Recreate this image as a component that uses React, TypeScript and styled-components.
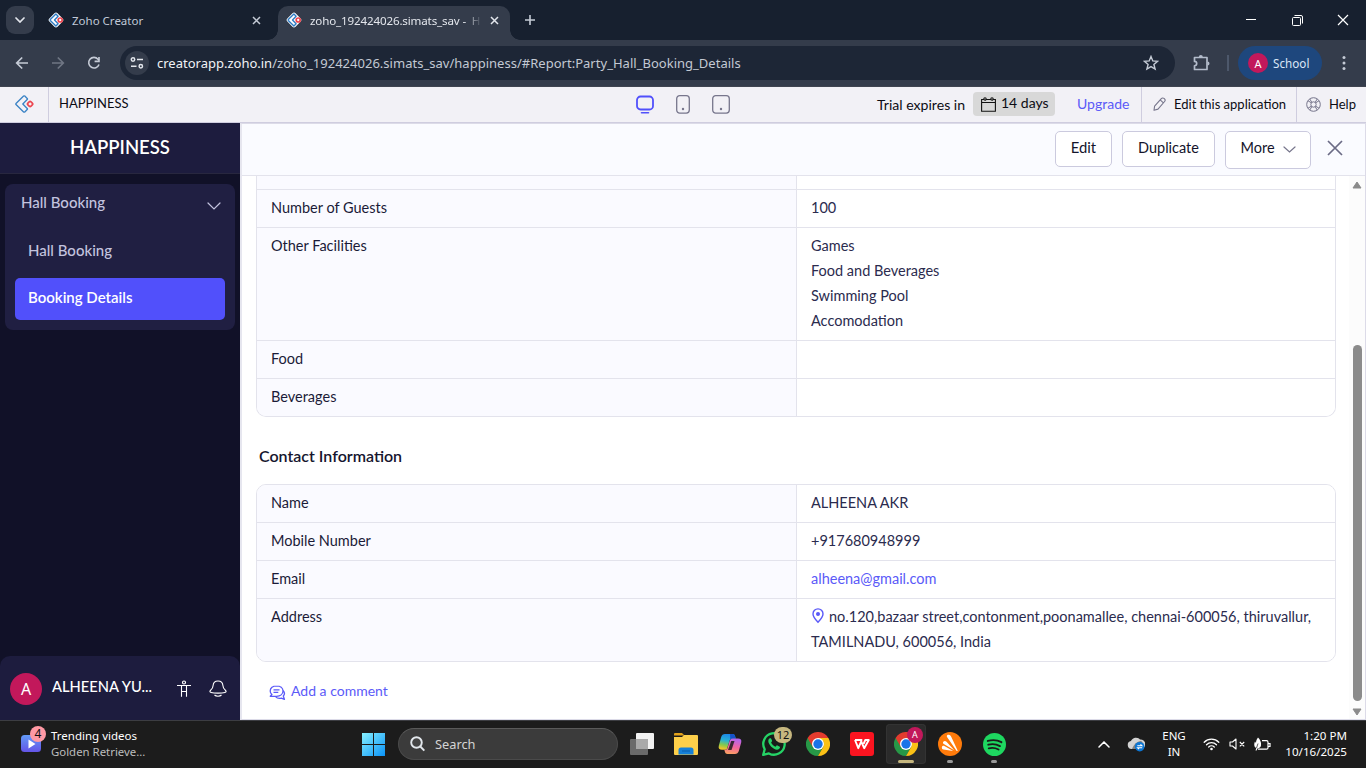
import React from "react";
import styled, { createGlobalStyle } from "styled-components";

const GlobalStyle = createGlobalStyle`
  *, *::before, *::after { box-sizing: border-box; }
  html, body { margin: 0; padding: 0; }
  body { width: 1366px; height: 768px; overflow: hidden; background: #fff; }
  svg { display: block; flex: none; }
`;

const ui = `"Noto Sans", "Open Sans", sans-serif`;
const lato = `Lato, "Open Sans", sans-serif`;

const Screen = styled.div`
  width: 1366px;
  height: 768px;
  display: flex;
  flex-direction: column;
  overflow: hidden;
  font-family: ${lato};
`;

/* Text run with fine control of tracking and vertical nudge */
const Label = styled.span<{ $size?: number; $track?: number; $weight?: number; $color?: string; $lift?: number; $ui?: boolean }>`
  font-family: ${(p) => (p.$ui ? ui : lato)};
  font-size: ${(p) => p.$size ?? 15}px;
  letter-spacing: ${(p) => (p.$track ? p.$track + "px" : "normal")};
  font-weight: ${(p) => p.$weight ?? 400};
  color: ${(p) => p.$color ?? "inherit"};
  padding-bottom: ${(p) => p.$lift ?? 0}px;
  white-space: nowrap;
`;

/* ---------- browser chrome ---------- */
const TabStrip = styled.div`
  height: 40px;
  flex: none;
  background: #17202f;
  display: flex;
  align-items: flex-end;
`;
const TabSearch = styled.div`
  width: 28px;
  height: 28px;
  margin: 0 8px 6px 6px;
  border-radius: 9px;
  background: #343c4b;
  display: grid;
  place-items: center;
`;
const Tab = styled.div<{ $active?: boolean }>`
  height: 34px;
  width: ${(p) => (p.$active ? 232 : 236)}px;
  padding: 0 ${(p) => (p.$active ? 8 : 14)}px 6px ${(p) => (p.$active ? 8 : 6)}px;
  border-radius: 10px 10px 0 0;
  background: ${(p) => (p.$active ? "#343c4b" : "transparent")};
  color: ${(p) => (p.$active ? "#e3e6ec" : "#c0c9d8")};
  display: flex;
  align-items: center;
  position: relative;
  ${(p) => p.$active && `
    &::before, &::after {
      content: "";
      position: absolute;
      bottom: 0;
      width: 10px;
      height: 10px;
    }
    &::before { left: -10px; background: radial-gradient(circle at 0 0, transparent 9.5px, #343c4b 10px); }
    &::after { right: -10px; background: radial-gradient(circle at 100% 0, transparent 9.5px, #343c4b 10px); }
  `}
`;
const TabTitle = styled.div<{ $fade?: boolean }>`
  flex: 1;
  margin-left: 8px;
  white-space: nowrap;
  display: flex;
  align-items: center;
  ${(p) => p.$fade && "mask-image: linear-gradient(90deg, #000 155px, transparent 172px);"}
`;
const TabClose = styled.div`
  width: 16px;
  display: grid;
  place-items: center;
`;
const NewTab = styled.div`
  width: 20px;
  height: 28px;
  margin: 0 0 6px 10px;
  display: grid;
  place-items: center;
`;
const WindowButtons = styled.div`
  margin-left: auto;
  height: 40px;
  display: flex;
`;
const WindowButton = styled.div`
  width: 46px;
  display: grid;
  place-items: center;
`;
const Toolbar = styled.div`
  height: 47px;
  flex: none;
  background: #343c4b;
  border-bottom: 1px solid #3f4450;
  display: flex;
  align-items: center;
  padding-left: 4px;
`;
const ToolButton = styled.div<{ $w?: number }>`
  width: ${(p) => p.$w ?? 36}px;
  flex: none;
  display: grid;
  place-items: center;
`;
const Omnibox = styled.div`
  width: 1055px;
  height: 34px;
  margin-left: 8px;
  border-radius: 17px;
  background: #1d2636;
  display: flex;
  align-items: center;
  padding: 0 16px 0 5px;
`;
const SiteInfo = styled.div`
  width: 24px;
  height: 24px;
  border-radius: 12px;
  background: #343c4b;
  display: grid;
  place-items: center;
  margin-right: 8px;
`;
const Url = styled.div`
  flex: 1;
  color: #c3c9d3;
  white-space: nowrap;
  display: flex;
`;
const ToolDivider = styled.div`
  width: 2px;
  height: 16px;
  background: #4d586b;
  margin: 0 9px 0 0;
`;
const Profile = styled.div`
  width: 84px;
  height: 34px;
  border-radius: 17px;
  background: #1e477d;
  display: flex;
  align-items: center;
  gap: 5px;
  padding-left: 10px;
`;
const Avatar = styled.div<{ $size: number; $font: number }>`
  width: ${(p) => p.$size}px;
  height: ${(p) => p.$size}px;
  flex: none;
  border-radius: 50%;
  background: #c2185b;
  color: #fff;
  font-family: ${ui};
  font-size: ${(p) => p.$font}px;
  line-height: 1;
  display: grid;
  place-items: center;
`;

/* ---------- application bar ---------- */
const AppBar = styled.div`
  height: 36px;
  flex: none;
  background: #f2f1f6;
  border-bottom: 1px solid #cfcddf;
  display: flex;
  color: #0c0c14;
`;
const BarCell = styled.div<{ $w: number; $pad?: number; $line?: "left" | "right"; $gap?: number }>`
  width: ${(p) => p.$w}px;
  flex: none;
  display: flex;
  align-items: center;
  gap: ${(p) => p.$gap ?? 0}px;
  padding-left: ${(p) => p.$pad ?? 0}px;
  ${(p) => p.$line && `border-${p.$line}: 1px solid #cfcddf;`}
`;
const TrialText = styled.div`
  width: 96px;
  padding-bottom: 3px;
`;
const TrialChip = styled.div`
  width: 82px;
  height: 24px;
  margin-bottom: 1px;
  padding-left: 8px;
  border-radius: 4px;
  background: #d8d8d8;
  display: flex;
  align-items: center;
  gap: 5px;
`;

/* ---------- body ---------- */
const Body = styled.div`
  height: 597px;
  flex: none;
  display: flex;
`;
const Sidebar = styled.aside`
  width: 240px;
  flex: none;
  background: #111128;
  display: flex;
  flex-direction: column;
`;
const SideTitle = styled.div`
  height: 51px;
  background: #1d1c3e;
  border-bottom: 1px solid #28273f;
  color: #fff;
  display: flex;
  justify-content: center;
  align-items: center;
`;
const MenuCard = styled.div`
  height: 146px;
  margin: 10px 5px 0;
  border-radius: 8px;
  background: #201f42;
  color: #c3c3df;
  padding: 0 10px;
`;
const MenuHead = styled.div`
  height: 44px;
  padding: 0 4px 0 6px;
  display: flex;
  align-items: center;
  justify-content: space-between;
`;
const MenuItem = styled.div<{ $active?: boolean }>`
  height: ${(p) => (p.$active ? 42 : 50)}px;
  padding: 0 0 ${(p) => (p.$active ? 4 : 7)}px 13px;
  border-radius: 5px;
  display: flex;
  align-items: center;
  background: ${(p) => (p.$active ? "#5150fb" : "transparent")};
  color: ${(p) => (p.$active ? "#fff" : "#c3c3df")};
`;
const UserBar = styled.div`
  height: 64px;
  margin-top: auto;
  padding: 2px 0 0 10px;
  border-radius: 10px 10px 0 0;
  background: #1d1c3e;
  color: #fff;
  display: flex;
  align-items: center;
`;
const UserName = styled.div`
  width: 134px;
  padding: 0 0 7px 10px;
`;
const BellSlot = styled.div`
  margin-left: 17px;
`;
const Panel = styled.main`
  flex: 1;
  border: 1px solid #dcdbe8;
  border-left: 2px solid #e6e6ef;
  display: flex;
  flex-direction: column;
  background: #fff;
`;
const PanelHead = styled.div`
  height: 52px;
  flex: none;
  background: #fafbff;
  border-bottom: 1px solid #e3e3ec;
  display: flex;
  justify-content: flex-end;
  align-items: flex-start;
  gap: 10px;
  padding: 7px 20px 0 0;
`;
const Button = styled.div<{ $w: number; $h?: number }>`
  width: ${(p) => p.$w}px;
  height: ${(p) => p.$h ?? 36}px;
  border: 1px solid #cbcade;
  border-radius: 5px;
  background: #fff;
  color: #14142b;
  display: flex;
  justify-content: center;
  align-items: center;
  gap: 8px;
  padding-bottom: ${(p) => ((p.$h ?? 36) - 33)}px;
`;
const ChevronDrop = styled.div`
  padding-top: 4px;
`;
const CloseButton = styled.div`
  width: 20px;
  height: 34px;
  margin-left: 4px;
  display: grid;
  place-items: center;
`;
const PanelBody = styled.div`
  flex: 1;
  display: flex;
  min-height: 0;
`;
const Content = styled.div`
  width: 1107px;
  padding-left: 14px;
  overflow: hidden;
`;
const Table = styled.div<{ $cut?: boolean }>`
  width: 1080px;
  border: 1px solid #e3e3ec;
  border-radius: ${(p) => (p.$cut ? "0 0 10px 10px" : "10px")};
  ${(p) => p.$cut && "border-top: none;"}
  overflow: hidden;
`;
const Row = styled.div`
  display: grid;
  grid-template-columns: 540px 1fr;
  & + & { border-top: 1px solid #e3e3ec; }
`;
const Cell = styled.div<{ $head?: boolean; $cut?: boolean }>`
  min-height: ${(p) => (p.$cut ? 13 : 37)}px;
  padding: ${(p) => (p.$cut ? "0 14px" : "5px 14px 7px")};
  ${(p) => p.$head && "border-right: 1px solid #e3e3ec;"}
  background: ${(p) => (p.$head ? "#fafaff" : "#fff")};
  color: ${(p) => (p.$head ? "#1b1b38" : "#2b2b4e")};
`;
const Line = styled.div<{ $link?: boolean }>`
  height: 25px;
  line-height: 25px;
  font-size: 14.5px;
  white-space: nowrap;
  color: ${(p) => (p.$link ? "#5b5af8" : "inherit")};
  display: flex;
  gap: 4px;
`;
const SectionTitle = styled.h2`
  margin: 26px 0 16px 3px;
  height: 25px;
  line-height: 25px;
  font-size: 16px;
  font-weight: 600;
  color: #15152e;
`;
const CommentLink = styled.div`
  margin: 17px 0 0 13px;
  height: 25px;
  display: flex;
  align-items: center;
  gap: 5px;
  color: #5b5af8;
`;
const ScrollTrack = styled.div`
  width: 16px;
  background: #fcfcfc;
  display: flex;
  flex-direction: column;
  align-items: center;
  padding: 5px 0 3px;
`;
const ScrollThumb = styled.div`
  width: 9px;
  height: 356px;
  margin: 156px 0 auto 1px;
  border-radius: 5px;
  background: #8b8b8b;
`;

/* ---------- taskbar ---------- */
const Taskbar = styled.div`
  height: 48px;
  flex: none;
  background: #1c1c1c;
  border-top: 1px solid #3c3d42;
  display: flex;
  align-items: center;
  color: #fff;
  padding-bottom: 1px;
`;
const Widget = styled.div`
  width: 351px;
  padding-left: 20px;
  display: flex;
  align-items: center;
  gap: 5px;
`;
const Stack = styled.div<{ $align?: string; $w?: number }>`
  width: ${(p) => (p.$w ? p.$w + "px" : "auto")};
  display: flex;
  flex-direction: column;
  align-items: ${(p) => p.$align ?? "flex-start"};
  line-height: 16px;
`;
const AppIcon = styled.div<{ $active?: boolean; $running?: boolean }>`
  width: 40px;
  height: 40px;
  margin: 0 2px;
  border-radius: 4px;
  background: ${(p) => (p.$active ? "#2b2b2b" : "transparent")};
  ${(p) => p.$active && "box-shadow: inset 0 0 0 1px #333;"}
  display: grid;
  place-items: center;
  position: relative;
  ${(p) => (p.$active || p.$running) && `
    &::after {
      content: "";
      position: absolute;
      bottom: 1px;
      left: ${p.$active ? 12 : 17}px;
      width: ${p.$active ? 16 : 6}px;
      height: 3px;
      border-radius: 2px;
      background: ${p.$active ? "#c6b77f" : "#9a9a9a"};
    }
  `}
`;
const Badge = styled.div<{ $w: number; $x: number; $y: number; $bg: string; $fg: string; $font: number }>`
  position: absolute;
  left: ${(p) => p.$x}px;
  top: ${(p) => p.$y}px;
  min-width: ${(p) => p.$w}px;
  height: 16px;
  border-radius: 8px;
  background: ${(p) => p.$bg};
  color: ${(p) => p.$fg};
  font: ${(p) => p.$font}px/16px ${ui};
  text-align: center;
`;
const WidgetIcon = styled.div`
  width: 26px;
  height: 38px;
  padding-top: 10px;
  position: relative;
`;
const SearchBox = styled.div`
  width: 220px;
  height: 32px;
  margin: 0 2px 0 3px;
  border-radius: 16px;
  background: #3b3b3b;
  border: 1px solid #4a4a4a;
  border-top-color: #5a5a5a;
  display: flex;
  align-items: center;
  gap: 10px;
  padding-left: 11px;
  color: #d4d4d4;
`;
const Tray = styled.div`
  margin-left: auto;
  width: 276px;
  display: flex;
  align-items: center;
`;
const TrayCell = styled.div<{ $w: number }>`
  width: ${(p) => p.$w}px;
  flex: none;
  display: grid;
  place-items: center;
`;

/* ---------- icons ---------- */
const CreatorLogo = () => (
  <svg width="19" height="19" viewBox="0 0 19 19" fill="none" strokeLinejoin="round">
    <path d="M8.600 1.100 1 8.400a.8.8 0 0 0 0 1.200l7.600 7.300a.9.9 0 0 0 1.200 0l2.400-2.300a.9.9 0 0 0 0-1.200L7.800 9l4.400-4.400a.9.9 0 0 0 0-1.200L9.800 1.100a.9.9 0 0 0-1.200 0z" stroke="#3b83c5" strokeWidth="1.350" />
    <rect x="12.900" y="6.800" width="4.400" height="4.400" rx="1.300" transform="rotate(45 15.100 9)" stroke="#ec4650" strokeWidth="1.700" />
  </svg>
);
const Favicon = () => (
  <svg width="16" height="16" viewBox="0 0 16 16">
    <rect x="2.200" y="2.200" width="11.600" height="11.600" rx="2.200" fill="#fff" transform="rotate(45 8 8)" />
    <path d="M7.900 2.100 2.300 7.600a.6.6 0 0 0 0 .8l5.600 5.500 2.200-2.100L6.500 8l3.600-3.800z" fill="none" stroke="#2f7cc4" strokeWidth="1.400" strokeLinejoin="round" />
    <circle cx="12.200" cy="8" r="2" fill="#fff" stroke="#ec4650" strokeWidth="1.700" />
  </svg>
);
const Cross = ({ size, color, width = 1.5 }: { size: number; color: string; width?: number }) => (
  <svg width={size} height={size} viewBox={`0 0 ${size} ${size}`}>
    <path d={`M1 1 ${size - 1} ${size - 1}M${size - 1} 1 1 ${size - 1}`} stroke={color} strokeWidth={width} />
  </svg>
);
const Chevron = ({ w, h, color, width = 1.2, up = false }: { w: number; h: number; color: string; width?: number; up?: boolean }) => (
  <svg width={w} height={h} viewBox={`0 0 ${w} ${h}`}>
    <path d={up ? `M1 ${h - 1} ${w / 2} 1 ${w - 1} ${h - 1}` : `M1 1 ${w / 2} ${h - 1} ${w - 1} 1`} fill="none" stroke={color} strokeWidth={width} strokeLinecap="round" />
  </svg>
);
const Arrow = ({ color, flip }: { color: string; flip?: boolean }) => (
  <svg width="14" height="14" viewBox="0 0 14 14" fill="none" stroke={color} strokeWidth="1.700">
    <path d={flip ? "M1 7h11M6.800 1.500 12.300 7l-5.500 5.500" : "M13 7H2M7.200 1.500 1.700 7l5.500 5.500"} />
  </svg>
);
const Reload = () => (
  <svg width="14" height="14" viewBox="0 0 14 14">
    <path d="M12 8.500A5.300 5.300 0 1 1 11 3.200L12 4.300" fill="none" stroke="#c5cbd6" strokeWidth="1.600" />
    <path d="M12.800 1v5.200H7.600V4.600h3.600V1z" fill="#c5cbd6" />
  </svg>
);
const Tune = () => (
  <svg width="14" height="12" viewBox="0 0 14 12" fill="none" stroke="#e3e6ec" strokeWidth="1.500">
    <circle cx="3" cy="2.500" r="1.700" /><path d="M7 2.500h6M1 9.200h5.500" /><circle cx="10.800" cy="9.200" r="1.700" />
  </svg>
);
const Star = () => (
  <svg width="16" height="16" viewBox="0 0 16 16">
    <path d="m8 1.500 1.800 4.400 4.800.4-3.700 3.100 1.200 4.700L8 11.600l-4.100 2.500 1.200-4.700L1.400 6.300l4.800-.4z" fill="none" stroke="#c5cbd6" strokeWidth="1.400" />
  </svg>
);
const Puzzle = () => (
  <svg width="18" height="18" viewBox="0 0 18 18">
    <path d="M2.500 3.500H15V15.500H2.500v-3.700a2.200 2.200 0 0 0 0-4.400z" fill="none" stroke="#b3bccb" strokeWidth="1.700" strokeLinejoin="round" />
    <path d="M6.800 3a2 2 0 0 1 4 0zM15.500 7.500a2 2 0 0 1 0 4z" fill="#b3bccb" />
  </svg>
);
const MenuDots = () => (
  <svg width="4" height="16" viewBox="0 0 4 16" fill="#c5cbd6"><circle cx="2" cy="2.500" r="1.500" /><circle cx="2" cy="8" r="1.500" /><circle cx="2" cy="13.500" r="1.500" /></svg>
);
const Monitor = () => (
  <svg width="18" height="20" viewBox="0 0 18 20" fill="none" stroke="#5150fb" strokeLinecap="round">
    <rect x="1" y="1.500" width="16" height="13" rx="3.500" strokeWidth="1.800" /><path d="M5.500 17.700h7" strokeWidth="1.600" />
  </svg>
);
const Device = ({ w }: { w: number }) => (
  <svg width={w} height="20" viewBox={`0 0 ${w} 20`} fill="none" stroke="#77768c">
    <rect x=".7" y=".7" width={w - 1.4} height="17.400" rx="3" strokeWidth="1.300" /><circle cx={w / 2} cy="14" r="1.200" fill="#77768c" stroke="none" />
  </svg>
);
const Calendar = () => (
  <svg width="15" height="15" viewBox="0 0 15 15" fill="none" stroke="#111" strokeWidth="1.100">
    <path d="M.600 2.500h13.800v11.800H.600zM.600 5.500h13.800" /><circle cx="4" cy="1.900" r="1.200" fill="#d8d8d8" /><circle cx="11" cy="1.900" r="1.200" fill="#d8d8d8" />
  </svg>
);
const Pencil = () => (
  <svg width="13" height="16" viewBox="0 0 13 16" fill="none" stroke="#77768c" strokeWidth="1.100" strokeLinejoin="round">
    <path d="M1.600 9.200 8.300 1.600a1.900 1.900 0 0 1 2.700-.2l.5.500a1.900 1.900 0 0 1 .1 2.600L5 12.100l-4 1.200zM7.200 2.900l3.200 3" />
  </svg>
);
const Lifebuoy = () => (
  <svg width="15" height="15" viewBox="0 0 15 15" fill="none" stroke="#77768c" strokeWidth="1">
    <circle cx="7.500" cy="7.500" r="6.800" /><circle cx="7.500" cy="7.500" r="2.700" />
    <path d="m2 3.800 3.300 2M3.800 2l2 3.300M11.200 2l-2 3.300M13 3.800l-3.300 2M13 11.200l-3.300-2M11.200 13l-2-3.300M3.800 13l2-3.300M2 11.200l3.300-2" />
  </svg>
);
const Person = () => (
  <svg width="16" height="18" viewBox="0 0 16 18" fill="none" stroke="#fff">
    <circle cx="8" cy="2.500" r="1.500" strokeWidth="1.200" /><path d="M1 5.500h14M5.500 6v10.800M10.500 6v10.800M5.500 11.500h5" strokeWidth="1.100" />
  </svg>
);
const Bell = () => (
  <svg width="18" height="18" viewBox="0 0 18 18" fill="none" stroke="#fff" strokeWidth="1.100" strokeLinejoin="round">
    <path d="M9 1c-3 0-4.700 2-4.900 4.500C4 8 3.500 8.800 1.600 10.200c-1.100.9-.9 2 .5 2.200 3.200 1 10.600 1 13.800 0 1.400-.2 1.600-1.300.5-2.200-1.900-1.400-2.400-2.200-2.500-4.700C13.700 3 12 1 9 1zM5.500 15c1.700 1.600 5.300 1.600 7 0" />
  </svg>
);
const Pin = () => (
  <svg width="14" height="25" viewBox="0 0 14 25" fill="none" stroke="#5b5af8" strokeWidth="1.400">
    <path d="M7 18.200C3.600 14.600 2 12.400 2 9.900a5 5 0 0 1 10 0c0 2.500-1.600 4.700-5 8.300z" /><circle cx="7" cy="10" r="1.300" fill="#5b5af8" />
  </svg>
);
const CommentIcon = () => (
  <svg width="17" height="16" viewBox="0 0 17 16" fill="none" stroke="#5b5af8" strokeWidth="1.300" strokeLinejoin="round">
    <path d="M7.500 1.900C3.800 1.900 1.200 4.100 1.200 6.900c0 1.600.7 2.700 1.700 3.600L1.300 12.300h6.200c3.800 0 6.500-2.200 6.500-5.200s-2.700-5.200-6.500-5.200zM4.500 5.800h6M4.500 8.400h4.800M14 6.400c1.600 1.700 1.700 4.100.3 5.600l1.100 3.300-3-1.200c-2 .6-4.400.2-5.800-1.500" />
  </svg>
);
const Windows = () => (
  <svg width="23" height="23" viewBox="0 0 23 23">
    <defs><linearGradient id="win" x1="0" y1="0" x2="23" y2="23" gradientUnits="userSpaceOnUse"><stop stopColor="#86f0ff" /><stop offset="1" stopColor="#0a93f8" /></linearGradient></defs>
    <path d="M0 0h11v11H0zM12 0h11v11H12zM0 12h11v11H0zM12 12h11v11H12z" fill="url(#win)" />
  </svg>
);
const Search = () => (
  <svg width="15" height="16" viewBox="0 0 15 16" fill="none" stroke="#e2e7ec" strokeWidth="1.900">
    <circle cx="6.500" cy="6.500" r="5.300" fill="#454545" /><path d="m10.300 10.500 4 4.200" />
  </svg>
);
const TaskView = () => (
  <svg width="24" height="22" viewBox="0 0 24 22">
    <rect y="6" width="18" height="16" rx="1" fill="#6a6a6a" /><rect x="6" width="18" height="16" rx="1" fill="#f2f2f2" /><path d="M6 6h12v10H6z" fill="#a9a9a9" />
  </svg>
);
const Folder = () => (
  <svg width="24" height="22" viewBox="0 0 24 22">
    <path d="M0 1a1 1 0 0 1 1-1h7l2.500 2.500H0z" fill="#e3a21a" /><path d="M0 4h8l2-2h13a1 1 0 0 1 1 1v18a1 1 0 0 1-1 1H1a1 1 0 0 1-1-1z" fill="#fdcf4a" />
    <path d="M4.500 21.500V17a2.500 2.500 0 0 1 2.500-2.500h10a2.500 2.500 0 0 1 2.500 2.500v4.500z" fill="#1580d8" /><path d="M8 18h8" stroke="#0b5cab" />
  </svg>
);
const Copilot = () => (
  <svg width="24" height="22" viewBox="0 0 24 22">
    <defs>
      <linearGradient id="cpa" x1="8" y1="0" x2="5" y2="16" gradientUnits="userSpaceOnUse"><stop stopColor="#1a82ec" /><stop offset=".45" stopColor="#28b1d4" /><stop offset=".75" stopColor="#86c94b" /><stop offset="1" stopColor="#f2c42a" /></linearGradient>
      <linearGradient id="cpb" x1="17" y1="6" x2="14" y2="22" gradientUnits="userSpaceOnUse"><stop stopColor="#b464ee" /><stop offset=".5" stopColor="#f2649e" /><stop offset="1" stopColor="#fca65c" /></linearGradient>
    </defs>
    <path d="M7 1h7.500c1.400 0 2.200.8 2.600 2.200l.7 2.300h-3.300c-1.600 0-2.600 1-3.100 2.600L9.300 15c-.3 1-1 1.700-2 1.700H4c-2.600 0-3.900-1.500-3.200-4L3.200 4C3.800 2 5 1 7 1z" fill="url(#cpa)" />
    <path d="M14.500 1c1.400 0 2.200.8 2.600 2.200l.7 2.300h-3.300c-1 0-1.600.3-2.200 1L12 1z" fill="#1552c9" />
    <path d="M17 21H9.500c-1.400 0-2.200-.8-2.600-2.200l-.6-2.100h1.200c1 0 1.700-.6 2-1.700l2.100-6.900c.5-1.700 1.500-2.600 3.100-2.600H20c2.600 0 3.900 1.500 3.200 4L20.800 18c-.6 2-1.800 3-3.800 3z" fill="url(#cpb)" />
    <path d="M13.200 8h3.300l-3 9H10z" fill="#1c1c1c" opacity=".85" />
  </svg>
);
const WhatsApp = () => (
  <svg width="26" height="26" viewBox="0 0 26 26">
    <path d="m2.200 23.900 1.500-5.600A10.700 10.700 0 1 1 7.900 22.400z" fill="#171d19" stroke="#25d366" strokeWidth="2.300" strokeLinejoin="round" />
    <path d="M9 7.300c-.8.1-1.700 1.200-1.700 2.700 0 3.500 5 8.700 8.700 8.700 1.500 0 2.800-.9 3-2.100.1-.7-.1-.8-.6-1.100l-2-1c-.6-.3-.8-.1-1.200.4l-.7.800c-1.900-.6-3.700-2.400-4.400-4.100l.8-1c.3-.5.2-.9 0-1.300l-.7-1.500c-.3-.5-.6-.6-1.200-.5z" fill="#25d366" />
  </svg>
);
const Chrome = () => (
  <svg width="24" height="24" viewBox="0 0 24 24">
    <path d="M12 12 1.600 6A12 12 0 0 0 12 24l5.200-9z" fill="#279847" />
    <path d="M12 6h10.400A12 12 0 0 0 1.600 6l5.200 9z" fill="#e33b2e" />
    <path d="M17.200 9H12V6h10.400A12 12 0 0 1 12 24l5.200-9z" fill="#fbc116" />
    <circle cx="12" cy="12" r="6" fill="#fff" /><circle cx="12" cy="12" r="4.700" fill="#1a73e8" />
  </svg>
);
const Wps = () => (
  <svg width="24" height="24" viewBox="0 0 24 24">
    <rect width="24" height="24" rx="3" fill="#fb1420" />
    <path d="M5 8h7.300M5 8l3.300 8.200L11.200 9.500l3 6.700L18.800 8h-3.500l-1.700 3.800" fill="none" stroke="#fff" strokeWidth="1.900" strokeLinejoin="round" />
  </svg>
);
const Avast = () => (
  <svg width="24" height="24" viewBox="0 0 24 24">
    <circle cx="12" cy="12" r="12" fill="#ff7b0b" />
    <path d="M9.800 2.800c1.500-.5 2.700.3 3.400 1.900l6.300 13.500c.4.900-.4 1.200-1 .5L9.200 5.300c-.7-1-.4-2.200.6-2.500z" fill="#fff" />
    <path d="M5.500 9.500c.8-.8 2-.8 3 .2l7.800 8.600-10.500-6.200c-1-.7-1.100-1.800-.3-2.600zM3.900 15c.3-1 1.300-1.400 2.500-1l8.800 4.900-9.800-1.300C4.200 17.300 3.600 16.200 3.900 15z" fill="#fff" />
  </svg>
);
const Spotify = () => (
  <svg width="23" height="23" viewBox="0 0 24 24">
    <circle cx="12" cy="12" r="12" fill="#1ed760" />
    <path d="M5 8.300c4.500-1.300 10.300-.9 14.200 1.300M5.500 12.200c4-1.100 8.500-.6 12.200 1.400M6 16c3.500-.9 7-.5 10.200 1.200" fill="none" stroke="#1a1c1a" strokeWidth="2" strokeLinecap="round" />
  </svg>
);
const VideoTile = () => (
  <svg width="21" height="18" viewBox="0 0 21 18">
    <defs><linearGradient id="vt" x1="0" y1="0" x2="0" y2="18" gradientUnits="userSpaceOnUse"><stop stopColor="#629bf7" /><stop offset="1" stopColor="#6450e6" /></linearGradient></defs>
    <rect x="1" y="0" width="20" height="17" rx="3.500" fill="url(#vt)" /><path d="M8.500 4.500v9l7-4.500z" fill="#fff" />
  </svg>
);
const OneDrive = () => (
  <svg width="18" height="16" viewBox="0 0 18 16">
    <path d="M4.500 13a4 4 0 0 1-.6-7.900A5.500 5.500 0 0 1 13 3.500a4 4 0 0 1 1 9.500z" fill="#d3d3d3" /><path d="M5 13c2-5 5-7.500 9-8 1.700 1 2.200 2.500 2 4L14 13z" fill="#808080" />
    <circle cx="12.700" cy="10.700" r="4.800" fill="#0c76d4" /><path d="M10.300 9.800h4.600l-1.400-1.400M15.200 11.700h-4.600l1.400 1.400" stroke="#fff" fill="none" strokeWidth="1.100" />
  </svg>
);
const Wifi = () => (
  <svg width="17" height="14" viewBox="0 0 17 14" fill="none" stroke="#fff" strokeWidth="1.300" strokeLinecap="round">
    <path d="M1.200 5.200a10.200 10.200 0 0 1 14.600 0M3.500 7.700a7 7 0 0 1 10 0M5.700 10a4 4 0 0 1 5.600 0" /><circle cx="8.500" cy="12" r="1.300" fill="#fff" stroke="none" />
  </svg>
);
const Muted = () => (
  <svg width="17" height="12" viewBox="0 0 17 12" fill="none" stroke="#fff" strokeWidth="1.100" strokeLinejoin="round">
    <path d="M1 4h2.500L7 1v10L3.500 8H1zM10.800 4l4.400 4.400M15.200 4l-4.400 4.400" />
  </svg>
);
const Battery = () => (
  <svg width="18" height="15" viewBox="0 0 18 15">
    <path d="M9 3.700h4.500a1.500 1.500 0 0 1 1.500 1.500v5.500a1.500 1.500 0 0 1-1.500 1.500H5M15.500 6.500H17v3h-1.500" fill="none" stroke="#fff" strokeWidth="1.200" />
    <path d="M5 .5c2 2 3.500 4.500 3 8-.4 2-1.500 2.600-3.300 2.700L3.600 13.500H2.500l.8-2.500C1 10 .8 7 2 4.500l1 1.500C3 4 3.800 2 5 .5z" fill="#fff" /><path d="m5 6.500-1.500 4.500" stroke="#1c1c1c" strokeWidth=".7" />
  </svg>
);
const Tri = ({ up }: { up?: boolean }) => (
  <svg width="10" height="8" viewBox="0 0 10 8"><path d={up ? "M5 1 9 7H1z" : "M5 7 9 1H1z"} fill="#8b8b8b" stroke="#8b8b8b" strokeLinejoin="round" /></svg>
);

type Entry = { label: string; lines: string[]; kind?: "link" | "place" };

const booking: Entry[] = [
  { label: "Number of Guests", lines: ["100"] },
  { label: "Other Facilities", lines: ["Games", "Food and Beverages", "Swimming Pool", "Accomodation"] },
  { label: "Food", lines: [] },
  { label: "Beverages", lines: [] },
];
const contact: Entry[] = [
  { label: "Name", lines: ["ALHEENA AKR"] },
  { label: "Mobile Number", lines: ["+917680948999"] },
  { label: "Email", lines: ["alheena@gmail.com"], kind: "link" },
  { label: "Address", lines: ["no.120,bazaar street,contonment,poonamallee, chennai-600056, thiruvallur,", "TAMILNADU, 600056, India"], kind: "place" },
];

const Entries = ({ items }: { items: Entry[] }) => (
  <>
    {items.map((e) => (
      <Row key={e.label}>
        <Cell $head><Line>{e.label}</Line></Cell>
        <Cell>
          {e.lines.map((t, i) => (
            <Line key={t} $link={e.kind === "link"}>
              {e.kind === "place" && i === 0 && <Pin />}
              <span>{t}</span>
            </Line>
          ))}
        </Cell>
      </Row>
    ))}
  </>
);

export default function App() {
  return (
    <Screen>
      <GlobalStyle />
      <TabStrip>
        <TabSearch><Chevron w={10} h={6} color="#e3e6ec" width={1.7} /></TabSearch>
        <Tab>
          <Favicon />
          <TabTitle><Label $ui $size={11.5}>Zoho Creator</Label></TabTitle>
          <TabClose><Cross size={9} color="#c5cbd6" /></TabClose>
        </Tab>
        <Tab $active>
          <Favicon />
          <TabTitle $fade><Label $ui $size={11.6} $track={-0.15}>zoho_192424026.simats_sav - &nbsp;H</Label></TabTitle>
          <TabClose><Cross size={9} color="#e3e6ec" /></TabClose>
        </Tab>
        <NewTab><svg width="12" height="12" viewBox="0 0 12 12"><path d="M6 1v10M1 6h10" stroke="#c5cbd6" strokeWidth="1.600" /></svg></NewTab>
        <WindowButtons>
          <WindowButton><svg width="10" height="2" viewBox="0 0 10 2"><path d="M0 .5h10" stroke="#fff" /></svg></WindowButton>
          <WindowButton>
            <svg width="11" height="11" viewBox="0 0 11 11" fill="none" stroke="#fff"><rect x=".5" y="2.500" width="8" height="8" rx="1" /><path d="M2.500.5H9A1.500 1.500 0 0 1 10.500 2v6.500" /></svg>
          </WindowButton>
          <WindowButton><Cross size={12} color="#fff" width={1.2} /></WindowButton>
        </WindowButtons>
      </TabStrip>

      <Toolbar>
        <ToolButton><Arrow color="#c5cbd6" /></ToolButton>
        <ToolButton><Arrow color="#6f7684" flip /></ToolButton>
        <ToolButton><Reload /></ToolButton>
        <Omnibox>
          <SiteInfo><Tune /></SiteInfo>
          <Url>
            <Label $ui $size={13} $color="#f0f2f5">creatorapp.zoho.in</Label>
            <Label $ui $size={13} $track={0.02}>/zoho_192424026.simats_sav/happiness/#Report:Party_Hall_Booking_Details</Label>
          </Url>
          <Star />
        </Omnibox>
        <ToolButton $w={52}><Puzzle /></ToolButton>
        <ToolDivider />
        <Profile>
          <Avatar $size={20} $font={11}>A</Avatar>
          <Label $ui $size={11.7} $color="#dbe6f7" $lift={1}>School</Label>
        </Profile>
        <ToolButton $w={44}><MenuDots /></ToolButton>
      </Toolbar>

      <AppBar>
        <BarCell $w={49} $pad={15} $line="right"><CreatorLogo /></BarCell>
        <BarCell $w={587} $pad={10}><Label $size={13} $lift={3}>HAPPINESS</Label></BarCell>
        <BarCell $w={241} $gap={22}><Monitor /><Device w={14} /><Device w={18} /></BarCell>
        <BarCell $w={264}>
          <TrialText><Label $size={14.1}>Trial expires in</Label></TrialText>
          <TrialChip><Calendar /><Label $size={14} $lift={3}>14 days</Label></TrialChip>
          <BarCell $w={60} $pad={22}><Label $size={14} $color="#5b5af8" $lift={3}>Upgrade</Label></BarCell>
        </BarCell>
        <BarCell $w={155} $pad={11} $gap={8} $line="left"><Pencil /><Label $size={13} $lift={2}>Edit this application</Label></BarCell>
        <BarCell $w={70} $pad={9} $gap={8} $line="left"><Lifebuoy /><Label $size={13} $lift={2}>Help</Label></BarCell>
      </AppBar>

      <Body>
        <Sidebar>
          <SideTitle><Label $size={18.5} $weight={600} $lift={2}>HAPPINESS</Label></SideTitle>
          <MenuCard>
            <MenuHead>
              <Label $weight={500} $lift={8}>Hall Booking</Label>
              <Chevron w={14} h={8} color="#c3c3df" />
            </MenuHead>
            <MenuItem><Label $weight={500}>Hall Booking</Label></MenuItem>
            <MenuItem $active><Label $weight={600}>Booking Details</Label></MenuItem>
          </MenuCard>
          <UserBar>
            <Avatar $size={32} $font={16}>A</Avatar>
            <UserName><Label $size={14.700} $weight={500}>ALHEENA YU...</Label></UserName>
            <Person />
            <BellSlot><Bell /></BellSlot>
          </UserBar>
        </Sidebar>

        <Panel>
          <PanelHead>
            <Button $w={57}><Label $size={14.8} $lift={1}>Edit</Label></Button>
            <Button $w={93}><Label $size={14.5}>Duplicate</Label></Button>
            <Button $w={86} $h={38}><Label $size={14.5}>More</Label><ChevronDrop><Chevron w={13} h={7} color="#77768c" /></ChevronDrop></Button>
            <CloseButton><Cross size={16} color="#6b6b85" width={1.7} /></CloseButton>
          </PanelHead>
          <PanelBody>
            <Content>
              <Table $cut>
                <Row><Cell $head $cut /><Cell $cut /></Row>
                <Entries items={booking} />
              </Table>
              <SectionTitle>Contact Information</SectionTitle>
              <Table><Entries items={contact} /></Table>
              <CommentLink><CommentIcon /><Label $size={14} $lift={2}>Add a comment</Label></CommentLink>
            </Content>
            <ScrollTrack><Tri up /><ScrollThumb /><Tri /></ScrollTrack>
          </PanelBody>
        </Panel>
      </Body>

      <Taskbar>
        <Widget>
          <WidgetIcon>
            <VideoTile />
            <Badge $w={16} $x={10} $y={1} $bg="#ff99a4" $fg="#111" $font={12}>4</Badge>
          </WidgetIcon>
          <Stack>
            <Label $ui $size={11.5}>Trending videos</Label>
            <Label $ui $size={11.4} $color="#bdbdbd">Golden Retrieve...</Label>
          </Stack>
        </Widget>
        <AppIcon><Windows /></AppIcon>
        <SearchBox><Search /><Label $ui $size={12.800}>Search</Label></SearchBox>
        <AppIcon><TaskView /></AppIcon>
        <AppIcon><Folder /></AppIcon>
        <AppIcon><Copilot /></AppIcon>
        <AppIcon><WhatsApp /><Badge $w={18} $x={20} $y={3} $bg="#c6b77f" $fg="#111" $font={11}>12</Badge></AppIcon>
        <AppIcon><Chrome /></AppIcon>
        <AppIcon><Wps /></AppIcon>
        <AppIcon $active><Chrome /><Badge $w={16} $x={21} $y={3} $bg="#c2185b" $fg="#fff" $font={9}>A</Badge></AppIcon>
        <AppIcon $running><Avast /></AppIcon>
        <AppIcon $running><Spotify /></AppIcon>
        <Tray>
          <TrayCell $w={28}><Chevron w={12} h={7} color="#fff" width={1.5} up /></TrayCell>
          <TrayCell $w={36}><OneDrive /></TrayCell>
          <TrayCell $w={40}><Stack $align="center"><Label $ui $size={11.5}>ENG</Label><Label $ui $size={11.5}>IN</Label></Stack></TrayCell>
          <TrayCell $w={35}><Wifi /></TrayCell>
          <TrayCell $w={17}><Muted /></TrayCell>
          <TrayCell $w={32}><Battery /></TrayCell>
          <Stack $align="flex-end" $w={69}><Label $ui $size={11.6}>1:20 PM</Label><Label $ui $size={11.6}>10/16/2025</Label></Stack>
        </Tray>
      </Taskbar>
    </Screen>
  );
}
